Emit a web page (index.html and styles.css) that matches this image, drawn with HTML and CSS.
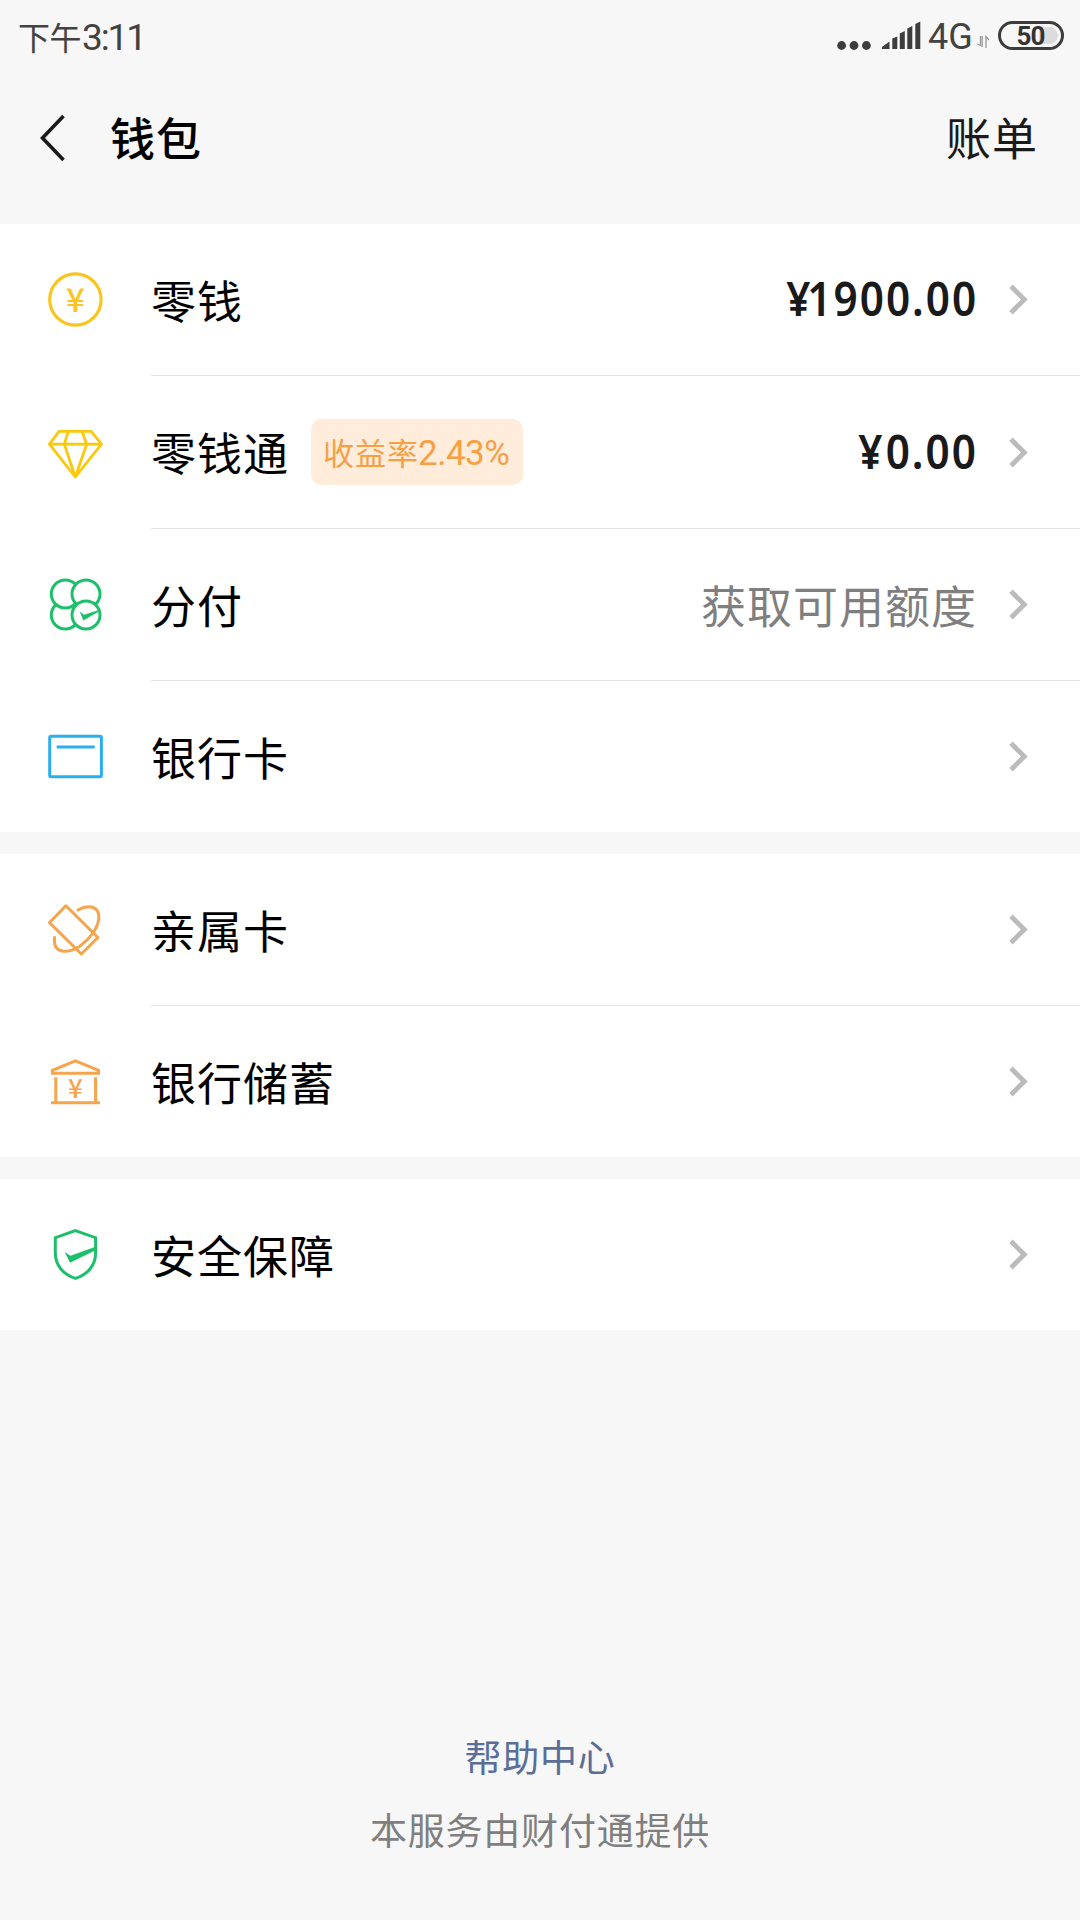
FILE: index.html
```
<!DOCTYPE html>
<html lang="zh-CN">
<head>
<meta charset="utf-8">
<title>钱包</title>
<link rel="stylesheet" href="styles.css">
</head>
<body>
<svg class="defs" width="0" height="0" aria-hidden="true">
  <symbol id="chevron" viewBox="0 0 22 31"><path d="M3 2.3 16.3 15.5 3 28.7" fill="none" stroke="#bbb" stroke-width="4.8"/></symbol>
</svg>
<div class="status">
  <div class="time"><span class="ampm">下午</span><span class="clock">3:11</span></div>
  <div class="indicators">
    <svg class="dots" width="34" height="50" viewBox="0 0 34 50" fill="#3d3d3d"><circle cx="4.6" cy="45.5" r="4.4"/><circle cx="17" cy="45.5" r="4.4"/><circle cx="29.4" cy="45.5" r="4.4"/></svg>
    <svg class="signal" width="39" height="50" viewBox="0 0 39 50" fill="#3d3d3d"><path d="M0 49v-2l7.5-5.500V49zM10.300 49V38.500l5-2V49zM17.800 49V33.500l5-2.500V49zM25.300 49V28.500l5-2.500V49zM33.300 49V24l5-2.500V49z"/></svg>
    <span class="net">4G</span>
    <svg class="data" width="13" height="14" viewBox="0 0 13 14" fill="none" stroke="#999" stroke-width="1.3"><path d="M0.500 9 3.500 10.500V1M9 13V1.500l3 3.500M5.200 1v11"/></svg>
    <div class="battery"><span class="level">50</span></div>
  </div>
</div>
<header class="bar">
  <svg class="back" width="28" height="50" viewBox="0 0 28 50"><path d="M24.500 3 3.500 25l21 22" fill="none" stroke="#1a1a1a" stroke-width="3.600"/></svg>
  <h1 class="title">钱包</h1>
  <span class="bill">账单</span>
</header>
<main>
  <section class="group">
    <div class="row">
      <svg class="icon" viewBox="0 0 59 59"><circle cx="29.400" cy="29.500" r="25.700" fill="none" stroke="#fac51e" stroke-width="3.200"/><text class="yen yen-coin" x="29.400" y="41.500" text-anchor="middle">¥</text></svg>
      <div class="cell"><span class="label">零钱</span><span class="amount"><span class="sign">¥</span>1900.00</span><svg class="chev"><use href="#chevron"/></svg></div>
    </div>
    <div class="row tall">
      <svg class="icon" viewBox="0 0 59 59" fill="none" stroke="#fcc80e" stroke-width="2.800" stroke-linejoin="round"><path d="M13 8.300h32.300l10.200 12.900-26.200 32.800L3.400 21.200zM3.400 21.200h52.100M22.300 8.300l-4 12.900 11 32.800 11.400-32.800-4.700-12.900"/></svg>
      <div class="cell"><span class="label">零钱通</span><span class="badge">收益率<span class="rate">2.43%</span></span><span class="amount"><span class="sign-wide">¥</span>0.00</span><svg class="chev"><use href="#chevron"/></svg></div>
    </div>
    <div class="row">
      <svg class="icon" viewBox="0 0 59 59" fill="#fff" stroke="#1dbf6b" stroke-width="3"><circle cx="19.300" cy="40" r="14"/><circle cx="19.300" cy="19" r="14"/><circle cx="40" cy="19" r="14"/><circle cx="40" cy="40" r="14"/><path d="M33.700 36.500 38 39.800 53 35v1.500L37.300 45.500z" fill="#1dbf6b" stroke="none"/></svg>
      <div class="cell"><span class="label">分付</span><span class="hint">获取可用额度</span><svg class="chev"><use href="#chevron"/></svg></div>
    </div>
    <div class="row">
      <svg class="icon" viewBox="0 0 59 59" fill="none" stroke="#2aaef0" stroke-width="3"><rect x="3.700" y="9.200" width="51.700" height="40.600" rx="1.500"/><path d="M10.700 20h38"/></svg>
      <div class="cell"><span class="label">银行卡</span><svg class="chev"><use href="#chevron"/></svg></div>
    </div>
  </section>
  <section class="group">
    <div class="row">
      <svg class="icon" viewBox="0 0 59 59" fill="none" stroke="#f5a54b" stroke-width="3" stroke-linejoin="round" stroke-linecap="round"><path d="M19.900 5.800 51.900 37.500 35.300 54 3.500 22.600z"/><path d="M32 10C43 4 54 6.500 52.800 18.500C52 28 44 39 33.500 46.500C22 53.500 6.500 54.500 8.600 37.500"/></svg>
      <div class="cell"><span class="label">亲属卡</span><svg class="chev"><use href="#chevron"/></svg></div>
    </div>
    <div class="row">
      <svg class="icon" viewBox="0 0 59 59" fill="none" stroke="#f5a54b" stroke-width="3"><path d="M6.500 21.300v-3L29.400 8.800l23.100 9.500v3zM9.800 25.200v25M49.600 25.200v25M5 50.800h49"/><text class="yen yen-bank" x="29.400" y="45.800" text-anchor="middle">¥</text></svg>
      <div class="cell"><span class="label">银行储蓄</span><svg class="chev"><use href="#chevron"/></svg></div>
    </div>
  </section>
  <section class="group">
    <div class="row">
      <svg class="icon" viewBox="0 0 59 59" fill="none" stroke="#1dbf6b" stroke-width="3"><path d="M29.400 5.600 49.600 12.700V28C49.600 40 42 49.500 29.400 53.400C17 49.500 9.300 40 9.300 28V12.700z"/><path d="M18.700 27 24.500 30.800 49.500 21.800v3.500L24 37.700z" fill="#1dbf6b" stroke="none"/></svg>
      <div class="cell"><span class="label">安全保障</span><svg class="chev"><use href="#chevron"/></svg></div>
    </div>
  </section>
</main>
<footer class="foot">
  <a class="help">帮助中心</a>
  <p class="note">本服务由财付通提供</p>
</footer>
</body>
</html>
```
FILE: styles.css
```
* { box-sizing: border-box; }
body {
  margin: 0;
  width: 1080px;
  height: 1920px;
  display: flex;
  flex-direction: column;
  background: #f7f7f7;
  color: #000;
  font-family: "Noto Sans CJK SC", sans-serif;
  overflow: hidden;
}
.defs { display: block; flex: none; height: 0; }
.status {
  height: 72px;
  display: flex;
  justify-content: space-between;
  padding: 0 16px 0 18px;
  color: #424242;
}
.time { display: flex; align-items: baseline; line-height: 72px; }
.ampm { font-size: 32px; letter-spacing: -0.5px; }
.clock { font-family: Roboto, sans-serif; font-size: 37px; letter-spacing: -2.1px; margin-left: 1px; }
.indicators { display: flex; align-items: flex-start; }
.dots { margin-right: 11px; }
.signal { margin-right: 7px; }
.net { font-family: Roboto, sans-serif; font-size: 36px; line-height: 40px; margin-top: 17px; width: 49px; }
.data { margin-top: 35px; margin-right: 8px; }
.battery {
  width: 66px;
  height: 29px;
  margin-top: 21px;
  border: 3px solid #3d3d3d;
  border-radius: 15px;
  padding: 3px;
  display: flex;
  align-items: center;
  justify-content: center;
  background: radial-gradient(circle at 48px 11.5px, #dcdcdc 8.5px, transparent 9px), linear-gradient(#dcdcdc, #dcdcdc) 38px 3px / 10px 17px no-repeat;
}
.level { font-family: Roboto, sans-serif; font-size: 26px; font-weight: 700; line-height: 26px; letter-spacing: -0.8px; color: #333; margin: 1px 1px 0 0; }
.bar { height: 152px; display: flex; align-items: flex-start; padding: 0 44px 0 39px; }
.back { margin-top: 41px; }
.title { margin: 33px 0 0 43px; font-size: 45px; font-weight: 500; line-height: 64px; letter-spacing: 1px; }
.bill { margin: 33px -2px 0 auto; font-size: 45px; line-height: 64px; letter-spacing: 1px; color: #1a1a1a; }
.group { background: #fff; margin-bottom: 22px; }
.row { display: flex; align-items: center; height: 152px; padding-left: 46px; }
.row.tall { height: 153px; }
.row:last-child { height: 151px; }
.icon { width: 59px; height: 59px; flex: none; margin: 0 46px 1px 0; }
.cell {
  flex: 1;
  height: 100%;
  display: flex;
  align-items: center;
  padding-right: 50px;
  border-bottom: 1px solid #e4e4e4;
}
.row:last-child .cell { border-bottom: 0; }
.label { font-size: 45px; line-height: 64px; letter-spacing: 1px; }
.chev { width: 22px; height: 31px; margin-left: auto; }
.amount, .hint { margin-left: auto; }
.amount {
  font-family: "Noto Sans", sans-serif;
  font-size: 47px;
  font-weight: 600;
  line-height: 64px;
  color: #1a1a1a;
  letter-spacing: 2.2px;
  margin: -3px -2px 0 auto;
  transform: scaleX(0.9);
  transform-origin: right;
}
.sign { letter-spacing: -3.5px; }
.sign-wide { letter-spacing: 3.5px; }
.hint { font-size: 45px; line-height: 64px; letter-spacing: 1px; color: #7f7f7f; margin: 0 -1px 0 auto; }
.amount + .chev, .hint + .chev { margin-left: 32px; }
.badge {
  width: 212px;
  height: 66px;
  margin-left: 22px;
  padding-left: 12px;
  display: flex;
  align-items: baseline;
  border-radius: 10px;
  background: #ffecda;
  color: #f5a045;
  font-size: 31px;
  line-height: 66px;
  letter-spacing: 1px;
  white-space: nowrap;
}
.rate { font-family: Roboto, sans-serif; font-size: 35px; letter-spacing: -0.5px; margin-left: -1px; }
.yen { font-family: "Noto Sans CJK SC", sans-serif; font-weight: 500; stroke: none; }
.yen-coin { font-size: 33px; fill: #fac51e; }
.yen-bank { font-size: 26px; fill: #f5a54b; }
.foot { margin-top: auto; height: 190px; display: flex; flex-direction: column; align-items: center; }
.help { color: #5a6e99; font-size: 37px; line-height: 52px; letter-spacing: 0.8px; }
.note { margin: 21px 0 0; color: #7f7f7f; font-size: 37px; line-height: 52px; letter-spacing: 0.8px; }
```
